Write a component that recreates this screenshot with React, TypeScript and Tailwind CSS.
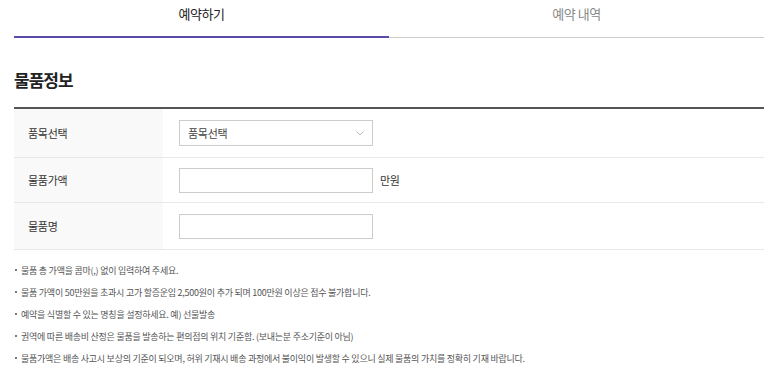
import React from 'react';

const notes = [
  '물품 총 가액을 콤마(,) 없이 입력하여 주세요.',
  '물품 가액이 50만원을 초과시 고가 할증운임 2,500원이 추가 되며 100만원 이상은 접수 불가합니다.',
  '예약을 식별할 수 있는 명칭을 설정하세요. 예) 선물발송',
  '권역에 따른 배송비 산정은 물품을 발송하는 편의점의 위치 기준함. (보내는분 주소기준이 아님)',
  '물품가액은 배송 사고시 보상의 기준이 되오며, 허위 기재시 배송 과정에서 불이익이 발생할 수 있으니 실제 물품의 가치를 정확히 기재 바랍니다.',
];

const Row = ({ label, height, children }: { label: string; height: string; children: React.ReactNode }) => (
  <div className={`flex border-b border-[#e8e8e8] ${height}`}>
    <div className="w-[149px] bg-[#f9f9f9] pl-[14px] flex items-center text-[11px] tracking-[-0.3px] text-[#333]">
      {label}
    </div>
    <div className="flex-1 pl-[16px] flex items-center">{children}</div>
  </div>
);

const App = () => {
  return (
    <div className="w-[774px] h-[388px] bg-white font-['Noto_Sans_CJK_KR',sans-serif] text-[#333]">
      <div className="ml-[14px] w-[750px]">
        {/* Tabs */}
        <div className="flex">
          <div className="flex-1 h-[38px] pt-[5px] text-center text-[13px] leading-[18px] tracking-[-0.5px] text-[#222] border-b-[2px] border-[#5a4ba8]">
            예약하기
          </div>
          <div className="flex-1 h-[38px] pt-[5px] text-center text-[13px] leading-[18px] tracking-[-0.5px] text-[#888] border-b border-[#cccccc]">
            예약 내역
          </div>
        </div>

        {/* Heading */}
        <h2 className="mt-[32px] mb-[17px] text-[17px] leading-[20px] font-bold tracking-[-1px] text-[#222]">물품정보</h2>

        {/* Table */}
        <div className="border-t-[2px] border-[#555]">
          <Row label="품목선택" height="h-[49px]">
            <div className="w-[194px] h-[26px] border border-[#cccccc] flex items-center justify-between pl-[8px] pr-[8px] text-[11px] tracking-[-0.3px] text-[#444]">
              <span>품목선택</span>
              <svg width="8" height="5" viewBox="0 0 8 5" fill="none">
                <path d="M0.5 0.5L4 4L7.5 0.5" stroke="#bbbbbb" strokeWidth="1" />
              </svg>
            </div>
          </Row>
          <Row label="물품가액" height="h-[45px]">
            <input type="text" className="w-[194px] h-[25px] border border-[#cccccc] outline-none" />
            <span className="ml-[7px] text-[11px] tracking-[-0.3px] text-[#333]">만원</span>
          </Row>
          <Row label="물품명" height="h-[47px]">
            <input type="text" className="w-[194px] h-[25px] border border-[#cccccc] outline-none" />
          </Row>
        </div>

        {/* Notes */}
        <ul className="mt-[10px]">
          {notes.map((n, i) => (
            <li key={i} className="flex items-center h-[22px] text-[9px] tracking-[-0.25px] text-[#555]">
              <span className="w-[2px] h-[2px] bg-[#777] mr-[4px] ml-[1px] -mt-[3px]"></span>
              {n}
            </li>
          ))}
        </ul>
      </div>
    </div>
  );
};

export default App;
